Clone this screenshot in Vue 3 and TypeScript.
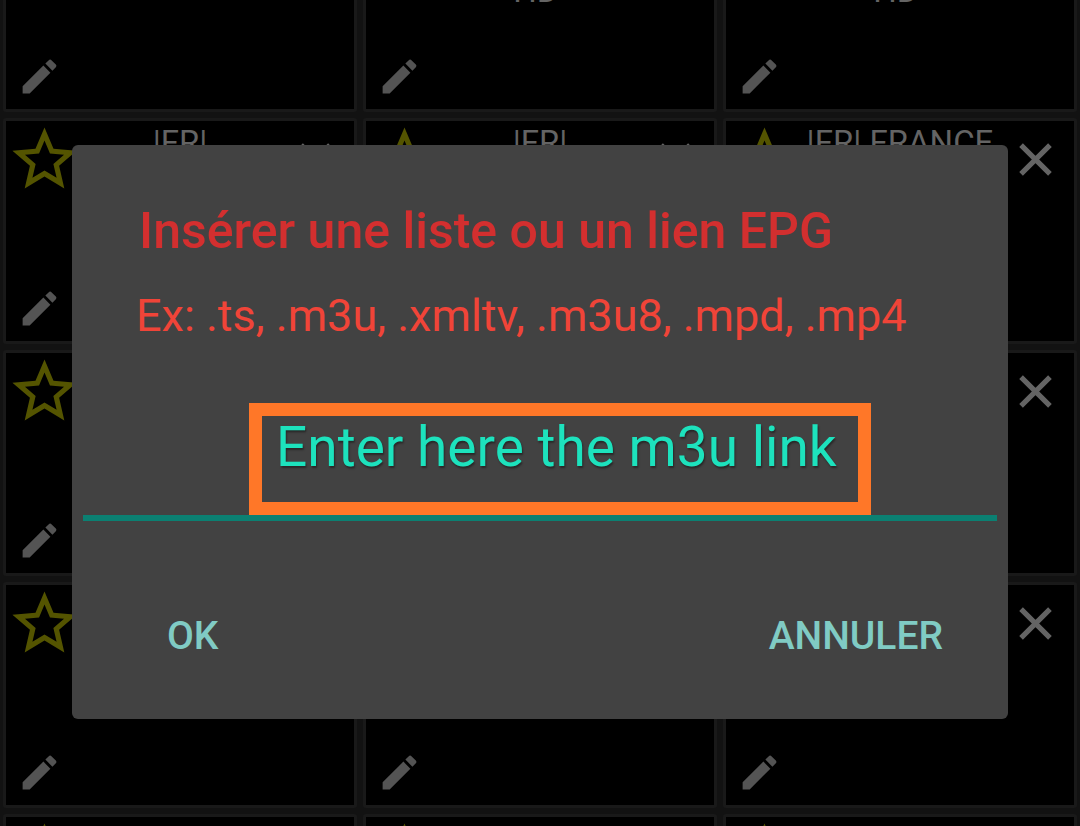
<script setup lang="ts">
import { ref } from 'vue'

interface Channel {
  id: number
  lines: string[]
}

const labels: Record<number, string[]> = {
  1: ['', '', 'HD\u00a0'],
  2: ['', '', 'HD\u00a0'],
  3: ['|FR|'],
  4: ['|FR|'],
  5: ['|FR| FRANCE'],
}

const channels: Channel[] = Array.from({ length: 15 }, (_, id) => ({
  id,
  lines: labels[id] ?? [],
}))

const link = ref('Enter here the m3u link')
</script>

<template>
  <div class="screen">
    <main class="wall">
      <article v-for="channel in channels" :key="channel.id" class="card">
        <div class="card-top">
          <button class="icon-button" type="button" aria-label="Favori">
            <svg class="star" viewBox="0 0 24 24" aria-hidden="true">
              <path d="M22 9.24l-7.19-.62L12 2 9.19 8.63 2 9.24l5.46 4.73L5.82 21 12 17.27 18.18 21l-1.63-7.03L22 9.24zM12 15.4l-3.76 2.27 1-4.28-3.32-2.88 4.38-.38L12 6.1l1.71 4.04 4.38.38-3.32 2.88 1 4.28L12 15.4z" />
            </svg>
          </button>
          <div class="label">
            <div v-for="(line, i) in channel.lines" :key="i" class="label-line">{{ line }}</div>
          </div>
          <button class="icon-button" type="button" aria-label="Supprimer">
            <svg class="close" viewBox="0 0 32 32" aria-hidden="true">
              <path d="M2 2L30 30M30 2L2 30" />
            </svg>
          </button>
        </div>
        <button class="edit-button" type="button" aria-label="Modifier">
          <svg class="pencil" viewBox="0 0 24 24" aria-hidden="true">
            <path d="M3 17.25V21h3.75L17.81 9.94l-3.75-3.75L3 17.25zM20.71 7.04c.39-.39.39-1.02 0-1.41l-2.34-2.34c-.39-.39-1.02-.39-1.41 0l-1.83 1.83 3.75 3.75 1.83-1.83z" />
          </svg>
        </button>
      </article>
    </main>

    <div class="overlay">
      <form class="dialog" role="dialog" aria-labelledby="dialog-title" @submit.prevent>
        <h1 id="dialog-title" class="title">Insérer une liste ou un lien EPG</h1>
        <label class="hint" for="link">Ex: .ts, .m3u, .xmltv, .m3u8, .mpd, .mp4</label>
        <div class="field">
          <input id="link" v-model="link" class="link" type="text" spellcheck="false" />
        </div>
        <div class="actions">
          <button class="action" type="submit">OK</button>
          <button class="action" type="button">ANNULER</button>
        </div>
      </form>
    </div>
  </div>
</template>

<style>
body {
  margin: 0;
  background: #111;
}
</style>

<style scoped>
.screen {
  position: relative;
  height: 100vh;
  overflow: hidden;
  background: #121212;
  font-family: Roboto, "Noto Sans", sans-serif;
}

.screen * {
  box-sizing: border-box;
}

button {
  margin: 0;
  padding: 0;
  border: 0;
  background: none;
  font: inherit;
}

svg {
  display: block;
}

/* The wall is scrolled half a card down. */
.wall {
  display: grid;
  grid-template-columns: repeat(3, 1fr);
  grid-auto-rows: 226px;
  gap: 6px;
  margin-top: -114px;
  padding: 0 3px;
}

.card {
  display: flex;
  flex-direction: column;
  justify-content: space-between;
  align-items: flex-start;
  border: 3px solid #191919;
  border-radius: 3px;
  background: #000;
}

.card-top {
  display: grid;
  grid-template-columns: 77px 1fr 77px;
  width: 100%;
  height: 77px;
}

.icon-button {
  display: flex;
  align-items: center;
  justify-content: center;
  height: 77px;
}

.star {
  width: 77px;
  height: 77px;
  fill: #545400;
}

.close {
  width: 33px;
  height: 33px;
  fill: none;
  stroke: #646464;
  stroke-width: 5;
}

.label {
  padding-top: 2px;
  color: #646464;
  font-size: 33px;
  line-height: 40px;
  text-align: center;
  white-space: nowrap;
}

.label-line {
  height: 40px;
}

.edit-button {
  margin: 0 0 10px 11px;
}

.pencil {
  width: 45px;
  height: 45px;
  fill: #545454;
}

.overlay {
  position: absolute;
  inset: 0;
  display: flex;
  align-items: center;
  padding: 38px 72px 0;
}

.dialog {
  flex: 1;
  min-width: 0;
  padding: 56px 11px 35px;
  border-radius: 6px;
  background: #424242;
}

.title {
  margin: 0 56px;
  color: #d32f2f;
  font-size: 50px;
  font-weight: 500;
  line-height: 60px;
  white-space: nowrap;
}

.hint {
  display: block;
  margin: 28px 53px 60px;
  color: #f04438;
  font-size: 45px;
  line-height: 54px;
  white-space: nowrap;
}

.field {
  display: flex;
  padding: 0 126px 0 166px;
  border-bottom: 6px solid #0b8072;
}

.link {
  flex: 1;
  min-width: 0;
  height: 112px;
  padding: 0 0 24px 14px;
  border: 13px solid #ff7728;
  border-radius: 0;
  outline: 0;
  background: transparent;
  color: #1de2bd;
  font-family: inherit;
  font-size: 55px;
  line-height: 62px;
  text-shadow: 1px 2px 2px rgba(0, 0, 0, 0.4);
}

.actions {
  display: flex;
  justify-content: space-between;
  margin-top: 67px;
  padding: 0 54px 0 84px;
}

.action {
  height: 96px;
  color: #80cbc4;
  font-size: 39px;
  font-weight: 500;
}
</style>
